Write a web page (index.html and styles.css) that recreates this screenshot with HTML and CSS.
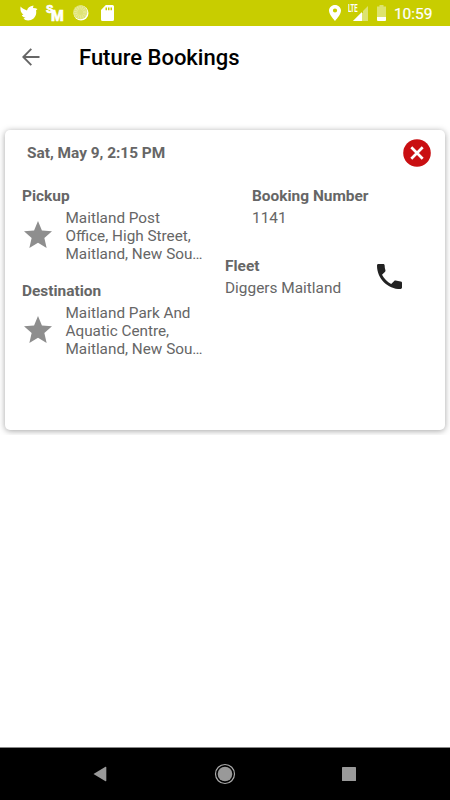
FILE: index.html
```html
<!DOCTYPE html>
<html lang="en">
<head>
<meta charset="utf-8">
<title>Future Bookings</title>
<link rel="stylesheet" href="styles.css">
</head>
<body>
<div class="status">
  <div class="status-left">
    <svg class="bird" width="18" height="16" viewBox="0 0 18 16"><path fill="#fff" d="M.5 1.500C2.500 3.800 5 4.500 7 5.500C7.500 3 9.500 1.300 13.500 .5L13 3L15.500 3.200L17.500 4L16 5.500C17 9 15 13.500 11 15C8 16 5 15.500 3.500 13.500L5.500 12.800C3 12 2 11 1.800 10L3.500 9.800C1 8 0 5.500 .5 1.500Z"/></svg>
    <div class="sm"><span class="s">S</span><span class="m">M</span></div>
    <svg class="ball" width="16" height="16" viewBox="0 0 16 16"><circle cx="8" cy="8" r="7.500" fill="#fff"/><circle cx="7.300" cy="7.300" r="7" fill="#dfe375"/><circle cx="7.300" cy="7.300" r="4.500" fill="none" stroke="#e8eb97" stroke-width="3.500" stroke-dasharray="1 1"/></svg>
    <svg class="sd" width="13" height="16" viewBox="0 0 13 16"><path fill="#fff" fill-rule="evenodd" d="M4.800 0H11.500Q13 0 13 1.500V14.500Q13 16 11.500 16H1.500Q0 16 0 14.500V5ZM4.500 2.500V5.300H6V2.500ZM7 2.500V5.300H8.500V2.500ZM9.500 2.500V5.300H11V2.500Z"/></svg>
  </div>
  <div class="status-right">
    <svg class="pin" width="12" height="16" viewBox="5 2 14 20" preserveAspectRatio="none"><path fill="#fff" fill-rule="evenodd" d="M12 2C8.130 2 5 5.130 5 9c0 5.250 7 13 7 13s7-7.750 7-13c0-3.870-3.130-7-7-7zm0 9.500a2.500 2.500 0 1 1 0-5 2.500 2.500 0 0 1 0 5z"/></svg>
    <div class="signal">
      <svg width="15" height="15" viewBox="0 0 15 15"><path fill="#dde36f" d="M15 0V15H0Z"/><path fill="#c8cd00" d="M0 0H10V7H0Z"/><path fill="#fff" d="M9 6V15H0Z"/></svg>
      <span class="lte">LTE</span>
    </div>
    <svg class="battery" width="9" height="16" viewBox="0 0 9 16"><path fill="#dde36f" d="M2.500 0H6.500V1.500H9V12H0V1.500H2.500Z"/><path fill="#fff" d="M0 12H9V15Q9 16 8 16H1Q0 16 0 15Z"/></svg>
    <span class="time">10:59</span>
  </div>
</div>
<header class="appbar">
  <svg width="18" height="18" viewBox="0 0 18 18" fill="none" stroke="#666" stroke-width="1.900"><path d="M17.500 9H1.500M9.300 .8L1.300 9L9.300 17.200"/></svg>
  <h1>Future Bookings</h1>
</header>
<main>
  <section class="card">
    <div class="card-head">
      <h2>Sat, May 9, 2:15 PM</h2>
      <svg width="28" height="28" viewBox="0 0 28 28"><circle cx="14" cy="14" r="13.800" fill="#c90f12"/><path d="M8.300 8.300L19.700 19.700M19.700 8.300L8.300 19.700" stroke="#fff" stroke-width="2.700"/></svg>
    </div>
    <div class="card-body">
      <div class="places">
        <h3>Pickup</h3>
        <div class="place">
          <svg width="28" height="27" viewBox="2 2 20 19" preserveAspectRatio="none"><path fill="#8e8e8e" d="M12 17.270L18.180 21l-1.640-7.030L22 9.240l-7.190-.61L12 2 9.190 8.630 2 9.240l5.460 4.730L5.820 21z"/></svg>
          <p>Maitland Post<br>Office, High Street,<br>Maitland, New Sou…</p>
        </div>
        <h3>Destination</h3>
        <div class="place">
          <svg width="28" height="27" viewBox="2 2 20 19" preserveAspectRatio="none"><path fill="#8e8e8e" d="M12 17.270L18.180 21l-1.640-7.030L22 9.240l-7.190-.61L12 2 9.190 8.630 2 9.240l5.460 4.730L5.820 21z"/></svg>
          <p>Maitland Park And<br>Aquatic Centre,<br>Maitland, New Sou…</p>
        </div>
      </div>
      <div class="details">
        <div class="number">
          <h3>Booking Number</h3>
          <p>1141</p>
        </div>
        <div class="fleet">
          <div>
            <h3>Fleet</h3>
            <p>Diggers Maitland</p>
          </div>
          <svg width="25" height="25" viewBox="3 3 18 18"><path fill="#222" d="M6.620 10.790c1.440 2.830 3.760 5.140 6.590 6.590l2.200-2.200c.27-.27.67-.36 1.020-.24 1.120.37 2.330.57 3.570.57.550 0 1 .45 1 1V20c0 .55-.45 1-1 1-9.390 0-17-7.610-17-17 0-.55.45-1 1-1h3.500c.55 0 1 .45 1 1 0 1.250.2 2.450.57 3.570.11.350.03.740-.25 1.020z"/></svg>
        </div>
      </div>
    </div>
  </section>
</main>
<nav class="navbar">
  <svg width="14" height="16" viewBox="0 0 14 16"><path d="M0.500 8L12.500 .8Q13.300 .5 13.300 1.500V14.500Q13.300 15.500 12.500 15.200Z" fill="#999"/></svg>
  <svg width="22" height="22" viewBox="0 0 22 22"><circle cx="11" cy="11" r="9.500" fill="none" stroke="#aaa" stroke-width="1.200"/><circle cx="11" cy="11" r="7.300" fill="#999"/></svg>
  <svg width="14" height="14" viewBox="0 0 14 14"><rect width="14" height="14" rx=".6" fill="#999"/></svg>
</nav>
</body>
</html>
```

FILE: styles.css
```css
* { box-sizing: border-box; }
body {
  margin: 0;
  width: 450px;
  height: 800px;
  display: flex;
  flex-direction: column;
  overflow: hidden;
  background: #fff;
  color: #666;
  font-family: Roboto, sans-serif;
}
svg { display: block; flex: none; }
h1, h2, h3, p { margin: 0; white-space: nowrap; }

.status {
  height: 26px;
  flex: none;
  background: #c8cd00;
  color: #fff;
  display: flex;
  justify-content: space-between;
}
.status-left { display: flex; padding: 5px 0 0 20px; }
.sm {
  width: 19px;
  margin-left: 8px;
  display: flex;
  font-weight: 900;
  line-height: 9px;
}
.s {
  width: 5px;
  font-size: 11.500px;
  -webkit-text-stroke: .5px #fff;
}
.m {
  margin-top: 7px;
  font-size: 14.500px;
  -webkit-text-stroke: .5px #fff;
}
.ball { margin-left: 8px; }
.sd { margin-left: 12px; }
.status-right { display: flex; padding: 5px 17.500px 0 0; }
.signal { position: relative; margin: 1px 0 0 12px; }
.lte {
  position: absolute;
  left: -5px;
  top: -2px;
  font-size: 10px;
  line-height: 10px;
  font-weight: 700;
  transform: scaleX(.6);
  transform-origin: left;
}
.battery { margin-left: 9px; }
.time {
  margin-left: 8px;
  font-size: 15.500px;
  line-height: 18px;
  -webkit-text-stroke: .2px #fff;
}

.appbar {
  height: 64px;
  flex: none;
  display: flex;
  align-items: center;
  padding: 0 0 2px 22px;
}
.appbar h1 {
  margin: 2px 0 0 39px;
  font-size: 22px;
  line-height: 26px;
  font-weight: 500;
  color: #000;
}

main {
  height: 345px;
  flex: none;
  padding: 40px 5px 5px;
  overflow: hidden;
}
.card {
  height: 300px;
  border-radius: 5px;
  background: #fff;
  box-shadow: 0 1px 6px rgba(0, 0, 0, .36);
}
.card-head {
  display: flex;
  justify-content: space-between;
  padding: 9px 14px 0 22px;
}
h2 { font-size: 15.400px; line-height: 28px; font-weight: 700; }
h3 { font-size: 15.450px; line-height: 20px; font-weight: 700; }
p { font-size: 15.400px; line-height: 18px; }
.card-body { display: flex; padding: 19px 0 0 17px; }
.places { width: 203px; }
.place {
  display: flex;
  align-items: center;
  gap: 13.500px;
  padding: 3px 0 18px 2px;
}
.place svg { margin-bottom: 3px; }
.place p { font-size: 15.300px; }
.number { padding-left: 27px; height: 70px; }
.number p, .fleet p { margin-top: 3px; }
.fleet { display: flex; }
.fleet svg { margin: 8px 0 0 36px; }

.navbar {
  margin-top: auto;
  height: 53px;
  border-top: 1px solid #888;
  background: #000;
  display: flex;
  align-items: center;
  justify-content: space-between;
  padding: 0 94px 0 93px;
}
```
